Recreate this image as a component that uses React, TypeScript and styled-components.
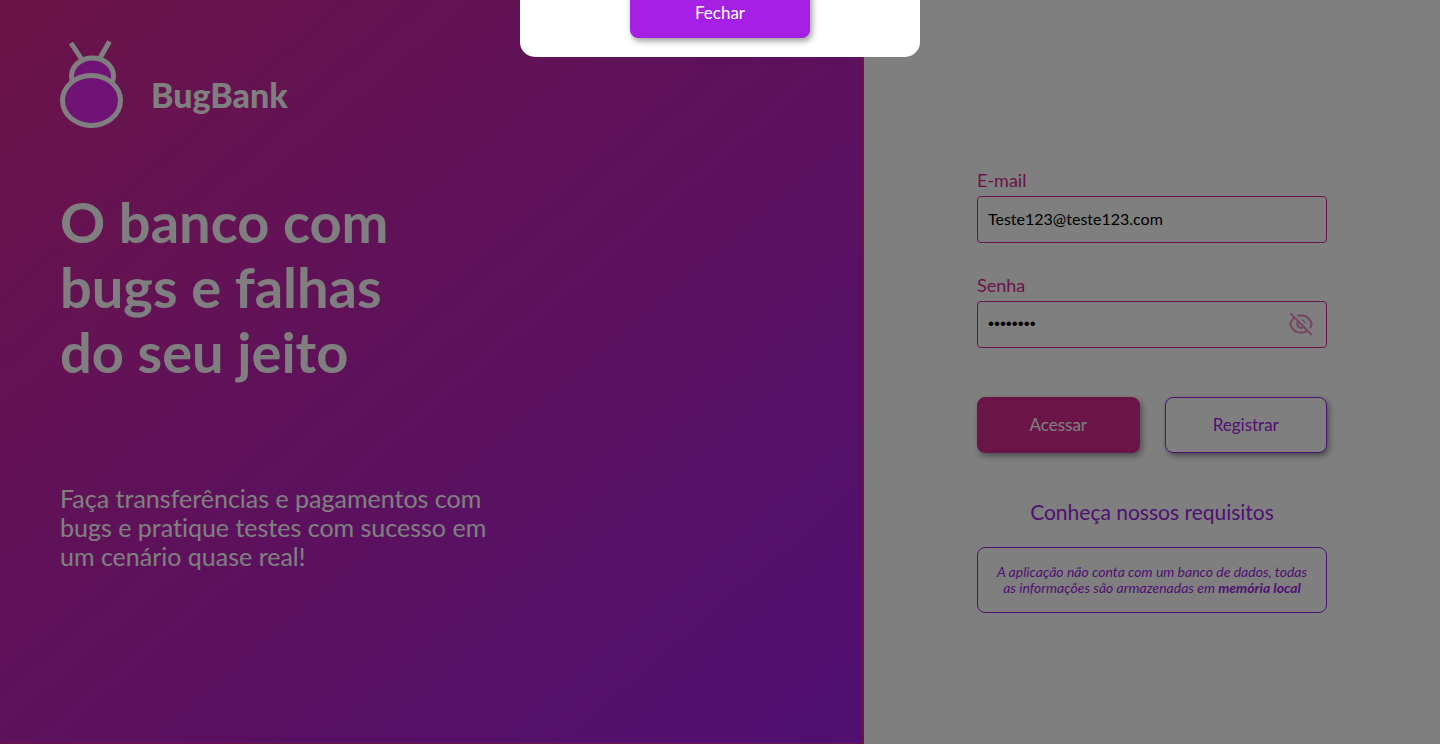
import React, { useState } from "react";
import styled, { createGlobalStyle } from "styled-components";
import { RiEyeOffLine } from "react-icons/ri";

const pink = "#d62890";
const purple = "#a01ee4";

const GlobalStyle = createGlobalStyle`
  *, *::before, *::after { box-sizing: border-box; }
  body {
    margin: 0;
    font-family: Lato, "Open Sans", sans-serif;
    font-variant-ligatures: none;
    background: #fff;
  }
  h1, p { margin: 0; }
  button, input { font-family: inherit; }
`;

const Page = styled.div`
  display: flex;
  min-height: 100vh;
`;

const Intro = styled.section`
  width: 60%;
  padding: 40px 60px;
  color: #fff;
  background: linear-gradient(to right bottom, ${pink}, ${purple});
  border: solid ${pink};
  border-width: 0 2px 1px 0;
`;

const Logo = styled.div`
  display: flex;
  align-items: flex-end;
  gap: 28px;
  height: 88px;
  margin-bottom: 61px;
`;

const LogoName = styled.span`
  padding-bottom: 14px;
  font-size: 34px;
  line-height: 38px;
  font-weight: 900;
`;

const Title = styled.h1`
  max-width: 400px;
  margin-bottom: 100px;
  font-size: 56px;
  line-height: 65px;
  font-weight: 700;
`;

const Lead = styled.p`
  max-width: 440px;
  font-size: 25px;
  line-height: 29px;
`;

const Access = styled.section`
  display: flex;
  flex: 1;
  flex-direction: column;
  align-items: center;
  justify-content: center;
  padding-top: 39px;
`;

const Form = styled.form`
  display: flex;
  flex-direction: column;
  width: 350px;
`;

const Field = styled.div`
  display: flex;
  flex-direction: column;
  gap: 6px;
  margin-bottom: 32px;
`;

const Label = styled.label`
  color: ${pink};
  font-size: 18px;
  line-height: 20px;
`;

const InputFrame = styled.div`
  display: flex;
  align-items: center;
  height: 47px;
  padding: 0 12px 2px 10px;
  border: 1px solid ${pink};
  border-radius: 4px;
`;

const Input = styled.input`
  flex: 1;
  min-width: 0;
  padding: 0;
  border: 0;
  outline: 0;
  background: transparent;
  color: #000;
  font-size: 16px;

  &[type="password"] {
    font-family: "Liberation Sans", sans-serif;
    font-size: 17px;
  }
`;

const EyeButton = styled.button`
  display: flex;
  padding: 0;
  border: 0;
  background: none;
  color: ${pink};
  opacity: 0.5;
`;

const Actions = styled.div`
  display: flex;
  gap: 25px;
  margin: 17px 0 47px;
`;

const Button = styled.button<{ $tone: string; $outline?: boolean }>`
  flex: 1;
  height: 56px;
  padding: 0 0 2px;
  border: 1px solid ${(p) => p.$tone};
  border-radius: 8px;
  background: ${(p) => (p.$outline ? "#fff" : p.$tone)};
  color: ${(p) => (p.$outline ? p.$tone : "#fff")};
  font-size: 17px;
  box-shadow: 2px 3px 6px rgba(0, 0, 0, 0.4);
`;

const Requirements = styled.a`
  align-self: center;
  margin-bottom: 24px;
  color: ${purple};
  font-size: 21px;
  line-height: 23px;
  text-decoration: none;
`;

const Notice = styled.p`
  padding: 16px 12px;
  border: 1px solid ${purple};
  border-radius: 8px;
  color: ${purple};
  font-size: 14px;
  line-height: 16px;
  font-style: italic;
  text-align: center;
`;

const Overlay = styled.div`
  position: fixed;
  inset: 0;
  background: rgba(0, 0, 0, 0.5);
`;

const Modal = styled.div`
  position: absolute;
  bottom: calc(100% - 57px);
  left: 50%;
  display: flex;
  flex-direction: column;
  align-items: center;
  width: 400px;
  margin-left: -200px;
  padding: 19px;
  border-radius: 15px;
  background: #fff;
`;

const CloseButton = styled(Button)`
  flex: none;
  width: 180px;
  height: 50px;
`;

function Bug() {
  return (
    <svg width="63" height="88" viewBox="0 0 63 88" fill="#e224ea" stroke="#fff" strokeWidth="5" aria-hidden="true">
      <path d="M11 3 21.5 19M49.5 1.5 40 18" fill="none" />
      <ellipse cx="32.5" cy="36" rx="21" ry="18" />
      <ellipse cx="31.5" cy="60.5" rx="29" ry="25" />
    </svg>
  );
}

export default function App() {
  const [email, setEmail] = useState("Teste123@teste123.com");
  const [password, setPassword] = useState("teste123");
  const [open, setOpen] = useState(true);

  return (
    <>
      <GlobalStyle />
      <Page>
        <Intro>
          <Logo>
            <Bug />
            <LogoName>BugBank</LogoName>
          </Logo>
          <Title>
            O banco com
            <br />
            bugs e falhas
            <br />
            do seu jeito
          </Title>
          <Lead>
            Faça transferências e pagamentos com
            <br />
            bugs e pratique testes com sucesso em
            <br />
            um cenário quase real!
          </Lead>
        </Intro>
        <Access>
          <Form onSubmit={(e) => e.preventDefault()}>
            <Field>
              <Label htmlFor="email">E-mail</Label>
              <InputFrame>
                <Input id="email" type="email" value={email} onChange={(e) => setEmail(e.target.value)} />
              </InputFrame>
            </Field>
            <Field>
              <Label htmlFor="password">Senha</Label>
              <InputFrame>
                <Input id="password" type="password" value={password} onChange={(e) => setPassword(e.target.value)} />
                <EyeButton type="button" aria-label="Mostrar senha">
                  <RiEyeOffLine size={26} />
                </EyeButton>
              </InputFrame>
            </Field>
            <Actions>
              <Button type="submit" $tone={pink}>Acessar</Button>
              <Button type="button" $tone={purple} $outline>Registrar</Button>
            </Actions>
            <Requirements href="#requisitos">Conheça nossos requisitos</Requirements>
            <Notice>
              A aplicação não conta com um banco de dados, todas
              <br />
              as informações são armazenadas em <b>memória local</b>
            </Notice>
          </Form>
        </Access>
      </Page>
      {open && (
        <Overlay>
          <Modal role="dialog" aria-modal="true">
            <CloseButton type="button" $tone="#a51fe4" onClick={() => setOpen(false)}>Fechar</CloseButton>
          </Modal>
        </Overlay>
      )}
    </>
  );
}
